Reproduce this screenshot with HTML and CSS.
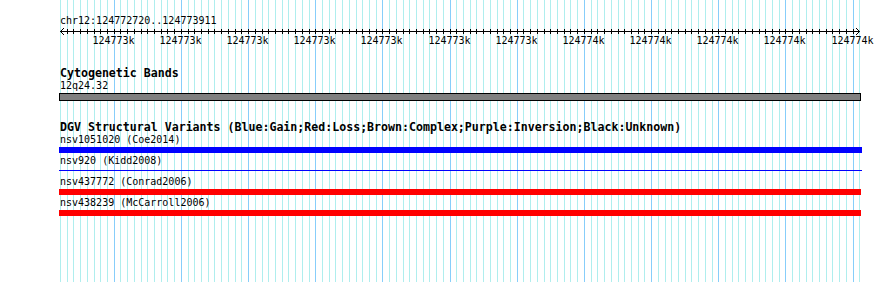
FILE: index.html
```html
<!DOCTYPE html>
<html lang="en">
<head>
<meta charset="utf-8">
<title>chr12:124772720..124773911</title>
<link rel="stylesheet" href="styles.css">
</head>
<body>
<div class="view">
  <svg class="grid" width="890" height="282" viewBox="0 0 890 282" aria-hidden="true">
    <path class="grid-minor" d="M60.5 0V282M67.5 0V282M73.5 0V282M80.5 0V282M87.5 0V282M94.5 0V282M100.5 0V282M107.5 0V282M120.5 0V282M127.5 0V282M134.5 0V282M141.5 0V282M147.5 0V282M154.5 0V282M161.5 0V282M167.5 0V282M174.5 0V282M188.5 0V282M194.5 0V282M201.5 0V282M208.5 0V282M214.5 0V282M221.5 0V282M228.5 0V282M235.5 0V282M241.5 0V282M255.5 0V282M262.5 0V282M268.5 0V282M275.5 0V282M282.5 0V282M288.5 0V282M295.5 0V282M302.5 0V282M309.5 0V282M322.5 0V282M329.5 0V282M335.5 0V282M342.5 0V282M349.5 0V282M356.5 0V282M362.5 0V282M369.5 0V282M376.5 0V282M389.5 0V282M396.5 0V282M403.5 0V282M409.5 0V282M416.5 0V282M423.5 0V282M429.5 0V282M436.5 0V282M443.5 0V282M456.5 0V282M463.5 0V282M470.5 0V282M476.5 0V282M483.5 0V282M490.5 0V282M497.5 0V282M503.5 0V282M510.5 0V282M523.5 0V282M530.5 0V282M537.5 0V282M544.5 0V282M550.5 0V282M557.5 0V282M564.5 0V282M570.5 0V282M577.5 0V282M591.5 0V282M597.5 0V282M604.5 0V282M611.5 0V282M618.5 0V282M624.5 0V282M631.5 0V282M638.5 0V282M644.5 0V282M658.5 0V282M665.5 0V282M671.5 0V282M678.5 0V282M685.5 0V282M691.5 0V282M698.5 0V282M705.5 0V282M712.5 0V282M725.5 0V282M732.5 0V282M738.5 0V282M745.5 0V282M752.5 0V282M759.5 0V282M765.5 0V282M772.5 0V282M779.5 0V282M792.5 0V282M799.5 0V282M806.5 0V282M812.5 0V282M819.5 0V282M826.5 0V282M832.5 0V282M839.5 0V282M846.5 0V282M859.5 0V282"/>
    <path class="grid-major" d="M114.5 0V282M181.5 0V282M248.5 0V282M315.5 0V282M382.5 0V282M450.5 0V282M517.5 0V282M584.5 0V282M651.5 0V282M718.5 0V282M785.5 0V282M853.5 0V282"/>
  </svg>

  <div class="tracks">
    <div class="ruler-track">
      <div class="seg-label">chr12:124772720..124773911</div>
      <svg class="ruler" width="890" height="8" viewBox="0 0 890 8" aria-hidden="true">
        <path class="ruler-line" d="M60 4.5H860"/>
        <path class="ruler-line" d="M64 1L60.5 4.5L64 8M856 1L859.5 4.5L856 8"/>
        <path class="ruler-line" d="M67.5 2V7M73.5 2V7M80.5 2V7M87.5 2V7M94.5 2V7M100.5 2V7M107.5 2V7M114.5 2V7M120.5 2V7M127.5 2V7M134.5 2V7M141.5 2V7M147.5 2V7M154.5 2V7M161.5 2V7M167.5 2V7M174.5 2V7M181.5 2V7M188.5 2V7M194.5 2V7M201.5 2V7M208.5 2V7M214.5 2V7M221.5 2V7M228.5 2V7M235.5 2V7M241.5 2V7M248.5 2V7M255.5 2V7M262.5 2V7M268.5 2V7M275.5 2V7M282.5 2V7M288.5 2V7M295.5 2V7M302.5 2V7M309.5 2V7M315.5 2V7M322.5 2V7M329.5 2V7M335.5 2V7M342.5 2V7M349.5 2V7M356.5 2V7M362.5 2V7M369.5 2V7M376.5 2V7M382.5 2V7M389.5 2V7M396.5 2V7M403.5 2V7M409.5 2V7M416.5 2V7M423.5 2V7M429.5 2V7M436.5 2V7M443.5 2V7M450.5 2V7M456.5 2V7M463.5 2V7M470.5 2V7M476.5 2V7M483.5 2V7M490.5 2V7M497.5 2V7M503.5 2V7M510.5 2V7M517.5 2V7M523.5 2V7M530.5 2V7M537.5 2V7M544.5 2V7M550.5 2V7M557.5 2V7M564.5 2V7M570.5 2V7M577.5 2V7M584.5 2V7M591.5 2V7M597.5 2V7M604.5 2V7M611.5 2V7M618.5 2V7M624.5 2V7M631.5 2V7M638.5 2V7M644.5 2V7M651.5 2V7M658.5 2V7M665.5 2V7M671.5 2V7M678.5 2V7M685.5 2V7M691.5 2V7M698.5 2V7M705.5 2V7M712.5 2V7M718.5 2V7M725.5 2V7M732.5 2V7M738.5 2V7M745.5 2V7M752.5 2V7M759.5 2V7M765.5 2V7M772.5 2V7M779.5 2V7M785.5 2V7M792.5 2V7M799.5 2V7M806.5 2V7M812.5 2V7M819.5 2V7M826.5 2V7M832.5 2V7M839.5 2V7M846.5 2V7M853.5 2V7"/>
      </svg>
      <div class="tick-labels">
        <span style="left:113.5px">124773k</span>
        <span style="left:180.5px">124773k</span>
        <span style="left:247.5px">124773k</span>
        <span style="left:314.5px">124773k</span>
        <span style="left:381.5px">124773k</span>
        <span style="left:449.5px">124773k</span>
        <span style="left:516.5px">124773k</span>
        <span style="left:583.5px">124774k</span>
        <span style="left:650.5px">124774k</span>
        <span style="left:717.5px">124774k</span>
        <span style="left:784.5px">124774k</span>
        <span style="left:852.5px">124774k</span>
      </div>
    </div>

    <section class="track">
      <h2 class="track-title">Cytogenetic Bands</h2>
      <div class="feat-label">12q24.32</div>
      <div class="band"></div>
    </section>

    <section class="track">
      <h2 class="track-title">DGV Structural Variants (Blue:Gain;Red:Loss;Brown:Complex;Purple:Inversion;Black:Unknown)</h2>
      <div class="feature">
        <div class="feat-label">nsv1051020 (Coe2014)</div>
        <div class="bar gain"></div>
      </div>
      <div class="feature">
        <div class="feat-label">nsv920 (Kidd2008)</div>
        <div class="bar gain-thin"></div>
      </div>
      <div class="feature">
        <div class="feat-label">nsv437772 (Conrad2006)</div>
        <div class="bar loss"></div>
      </div>
      <div class="feature">
        <div class="feat-label">nsv438239 (McCarroll2006)</div>
        <div class="bar loss"></div>
      </div>
    </section>
  </div>
</div>
</body>
</html>
```

FILE: styles.css
```css
* {
  box-sizing: border-box;
  margin: 0;
  padding: 0;
}

body {
  margin: 0;
  background: #ffffff;
  width: 890px;
  height: 282px;
  overflow: hidden;
}

.view {
  position: relative;
  width: 890px;
  height: 282px;
  font-family: "DejaVu Sans Mono", "Liberation Mono", monospace;
  color: #000000;
}

.grid {
  position: absolute;
  left: 0;
  top: 0;
  display: block;
}

.grid-minor {
  stroke: #afeeee;
  stroke-width: 1;
  fill: none;
  shape-rendering: crispEdges;
}

.grid-major {
  stroke: #87cefa;
  stroke-width: 1;
  fill: none;
  shape-rendering: crispEdges;
}

.tracks {
  position: relative;
  padding-top: 15px;
}

.seg-label,
.feat-label {
  font-size: 10px;
  line-height: 12px;
  padding-left: 60px;
  white-space: nowrap;
}

.ruler {
  display: block;
}

.ruler-line {
  stroke: #000000;
  stroke-width: 1;
  fill: none;
  shape-rendering: crispEdges;
}

.tick-labels {
  position: relative;
  height: 12px;
  font-size: 10px;
  line-height: 12px;
}

.tick-labels span {
  position: absolute;
  top: 0;
  transform: translateX(-50%);
  white-space: nowrap;
}

.track {
  margin-top: 20px;
}

.track-title {
  font-size: 11.6px;
  font-weight: bold;
  line-height: 13px;
  padding-left: 60px;
  white-space: nowrap;
}

.band {
  margin: 1px 0 0 59px;
  width: 802px;
  height: 8px;
  background: #808080;
  border: 1px solid #000000;
}

.feature {
  padding-bottom: 2px;
}

.bar {
  margin: 1px 0 0 59px;
  width: 802px;
  height: 6px;
}

.gain {
  width: 803px;
  background: #0000ff;
}

.gain-thin {
  width: 803px;
  background: linear-gradient(#0000ff, #0000ff) 0 2px / 100% 1px no-repeat;
}

.loss {
  background: #ff0000;
}
```
